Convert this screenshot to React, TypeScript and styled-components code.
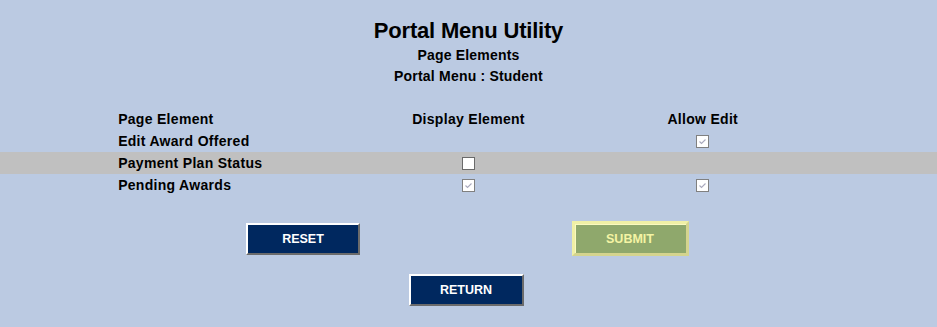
import React from 'react'
import styled, { createGlobalStyle } from 'styled-components'

const GlobalStyle = createGlobalStyle`
  html, body {
    margin: 0;
    padding: 0;
    background: #bbcae2;
    font-family: "Liberation Sans", Arial, sans-serif;
    color: #000;
  }
`

const Page = styled.div`
  padding-top: 18px;
  padding-bottom: 20px;
`

const Title = styled.h1`
  margin: 0;
  text-align: center;
  font-size: 22px;
  line-height: 25px;
  font-weight: bold;
  letter-spacing: -0.2px;
`

const SubTitle = styled.div`
  margin-top: 2px;
  text-align: center;
  font-size: 14px;
  line-height: 21px;
  font-weight: bold;
  letter-spacing: 0.2px;
`

const Table = styled.table`
  width: 100%;
  border-collapse: collapse;
  margin-top: 21px;
  table-layout: fixed;
`

const Row = styled.tr<{ shaded?: boolean }>`
  height: 22px;
  background: ${({ shaded }) => (shaded ? '#c0c0c0' : 'transparent')};
`

const Cell = styled.td<{ center?: boolean }>`
  padding: 0 1px;
  font-size: 14px;
  line-height: 22px;
  font-weight: bold;
  letter-spacing: 0.3px;
  white-space: nowrap;
  text-align: ${({ center }) => (center ? 'center' : 'left')};
  vertical-align: middle;
`

const Box = styled.span<{ disabled?: boolean }>`
  display: inline-flex;
  align-items: center;
  justify-content: center;
  box-sizing: border-box;
  width: 13px;
  height: 13px;
  vertical-align: middle;
  margin-top: -2px;
  background: #fff;
  border: 1px solid ${({ disabled }) => (disabled ? '#808080' : '#6a6a6a')};
`

const ButtonGrid = styled.div`
  display: grid;
  grid-template-columns: 327px 327px;
  justify-content: center;
  justify-items: center;
  align-items: center;
  margin-top: 25px;
  padding-right: 4px;
`

const Button = styled.button<{ wide?: number }>`
  box-sizing: border-box;
  width: ${({ wide }) => wide ?? 114}px;
  height: 32px;
  padding: 0;
  background: #00285f;
  color: #fff;
  font-family: "Liberation Sans", Arial, sans-serif;
  font-size: 12.5px;
  font-weight: bold;
  border-style: solid;
  border-width: 2px;
  border-color: #fff #6b6b6b #6b6b6b #fff;
  cursor: pointer;
`

const DisabledButton = styled(Button)`
  height: 35px;
  background: #8fa86c;
  color: #f4f4a4;
  border-width: 3px;
  border-color: #f0f0a6 #d4d48e #d4d48e #f0f0a6;
  box-shadow: inset 1px 1px 0 #fafac0;
  cursor: default;
`

const ReturnRow = styled.div`
  display: flex;
  justify-content: center;
  margin-top: 18px;
  padding-right: 5px;
`

function Check({ checked, disabled }: { checked?: boolean; disabled?: boolean }) {
  return (
    <Box disabled={disabled}>
      {checked && (
        <svg width="9" height="9" viewBox="0 0 9 9">
          <path d="M1.5 4.5 L3.5 6.5 L7.5 2.5" fill="none" stroke="#a9a9bd" strokeWidth="1.1" />
        </svg>
      )}
    </Box>
  )
}

const rows = [
  { name: 'Edit Award Offered', display: null, edit: true },
  { name: 'Payment Plan Status', display: false, edit: null },
  { name: 'Pending Awards', display: true, edit: true },
]

export default function App() {
  return (
    <Page>
      <GlobalStyle />
      <Title>Portal Menu Utility</Title>
      <SubTitle>Page Elements</SubTitle>
      <SubTitle style={{ marginTop: 0 }}>Portal Menu : Student</SubTitle>

      <Table>
        <colgroup>
          <col style={{ width: '12.5%' }} />
          <col style={{ width: '25%' }} />
          <col style={{ width: '25%' }} />
          <col style={{ width: '25%' }} />
          <col style={{ width: '12.5%' }} />
        </colgroup>
        <tbody>
          <Row>
            <Cell />
            <Cell>Page Element</Cell>
            <Cell center>Display Element</Cell>
            <Cell center>Allow Edit</Cell>
            <Cell />
          </Row>
          {rows.map((r, i) => (
            <Row key={r.name} shaded={i === 1}>
              <Cell />
              <Cell>{r.name}</Cell>
              <Cell center>
                {r.display !== null && <Check checked={r.display} disabled={r.display} />}
              </Cell>
              <Cell center>
                {r.edit !== null && <Check checked={r.edit} disabled={r.edit} />}
              </Cell>
              <Cell />
            </Row>
          ))}
        </tbody>
      </Table>

      <ButtonGrid>
        <Button>RESET</Button>
        <DisabledButton wide={117} disabled>SUBMIT</DisabledButton>
      </ButtonGrid>

      <ReturnRow>
        <Button wide={115}>RETURN</Button>
      </ReturnRow>
    </Page>
  )
}
